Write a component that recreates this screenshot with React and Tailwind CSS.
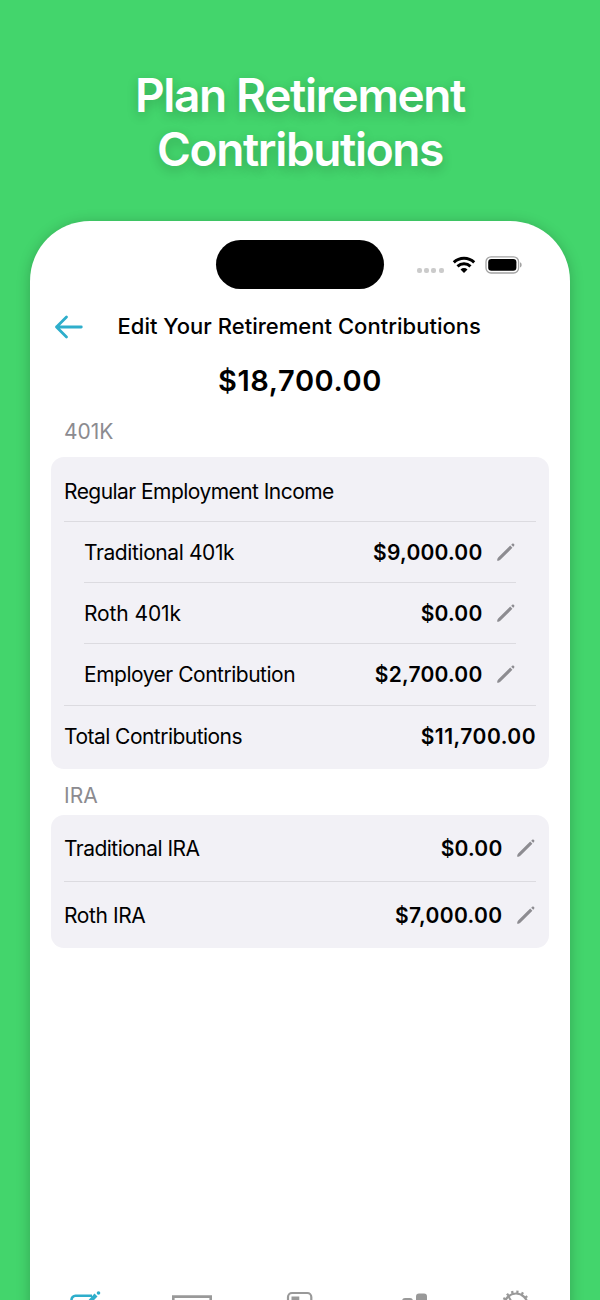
import { clsx } from 'clsx';

const plans401k = [
  { label: 'Traditional 401k', amount: '$9,000.00', spacing: 'tracking-[-0.4px]' },
  { label: 'Roth 401k', amount: '$0.00', spacing: 'tracking-[-0.1px]' },
  { label: 'Employer Contribution', amount: '$2,700.00', spacing: 'tracking-[-0.49px]' },
];

export default function App() {
  return (
    <div className="flex h-[1300px] w-[600px] flex-col items-center overflow-hidden bg-[#43d56c] font-['Inter',sans-serif] text-black">
      <h1 className="mt-[68px] h-[153px] shrink-0 text-center text-[46px] font-semibold leading-[54px] tracking-[-1.35px] text-white [text-shadow:0_4px_12px_rgba(0,0,0,.2)]">
        Plan Retirement
        <br />
        Contributions
      </h1>

      <div className="flex h-[1160px] w-[540px] shrink-0 flex-col rounded-[60px] bg-white shadow-[0_2px_14px_rgba(0,0,0,.22)]">
        <StatusBar />

        <header className="mt-[20px] flex h-[36px] items-center pl-[24px]">
          <BackArrow />
          <h2 className="ml-[33.5px] whitespace-nowrap pb-[2px] text-[22px] font-medium tracking-[0.02px]">
            Edit Your Retirement Contributions
          </h2>
        </header>

        <p className="mt-[16px] h-[40px] text-center text-[29px] font-semibold leading-[40px] tracking-[0.6px]">
          $18,700.00
        </p>

        <main className="px-[21px]">
          <SectionLabel className="mt-[16px]">401K</SectionLabel>
          <section className="mt-[10px] rounded-[13px] bg-[#f2f1f6] px-[13px]">
            <Row label="Regular Employment Income" spacing="tracking-[-0.55px]" className="h-[65px] border-b pt-[5px]" />
            {plans401k.map((plan, index) => (
              <Row
                key={plan.label}
                {...plan}
                editable
                className={clsx('mx-[20px] h-[61px]', index < 2 && 'border-b', index < 2 ? 'pt-[2px]' : 'pt-px')}
              />
            ))}
            <Row
              label="Total Contributions"
              amount="$11,700.00"
              spacing="tracking-[-0.53px]"
              amountSpacing="tracking-[0.5px]"
              className="h-[64px] border-t pb-[2px]"
            />
          </section>

          <SectionLabel className="mt-[12px]">IRA</SectionLabel>
          <section className="mt-[4px] rounded-[13px] bg-[#f2f1f6] px-[13px]">
            <Row
              label="Traditional IRA"
              amount="$0.00"
              editable
              spacing="tracking-[-0.53px]"
              className="h-[67px] border-b pt-[2px]"
            />
            <Row
              label="Roth IRA"
              amount="$7,000.00"
              editable
              spacing="tracking-[-0.4px]"
              amountSpacing="tracking-[0.38px]"
              className="h-[66px] pt-px"
            />
          </section>
        </main>

        <TabBar />
      </div>
    </div>
  );
}

function StatusBar() {
  return (
    <div className="flex h-[68px] shrink-0 pl-[186px] pt-[19px]">
      <div className="h-[49px] w-[168px] rounded-full bg-black" />
      <div className="ml-[33px] mt-[28px] flex gap-[2.2px]">
        <i className="size-[5px] rounded-[2px] bg-[#cbcbcb]" />
        <i className="size-[5px] rounded-[2px] bg-[#cbcbcb]" />
        <i className="size-[5px] rounded-[2px] bg-[#cbcbcb]" />
        <i className="size-[5px] rounded-[2px] bg-[#cbcbcb]" />
      </div>
      <svg className="ml-[8.4px] mt-[16px]" width="24" height="18" viewBox="0 0 24 18" fill="none" stroke="#000" strokeWidth="3">
        <path d="M1.8 6.4C7.5 .9 16.5 .9 22.2 6.4" />
        <path d="M5.5 10.3C9.1 6.9 14.9 6.9 18.5 10.3" />
        <path d="M12 17 8.5 13.4C10.5 11.6 13.5 11.6 15.5 13.4Z" fill="#000" stroke="none" />
      </svg>
      <svg className="ml-[9px] mt-[16px]" width="38" height="18" viewBox="0 0 38 18">
        <rect x="1" y=".8" width="32.6" height="16.2" rx="5" fill="none" stroke="#a3a3a3" strokeWidth="1.3" />
        <rect x="3.2" y="3" width="28.2" height="11.8" rx="3.2" />
        <path d="M35 6.3c2.2.8 2.2 4.4 0 5.2Z" fill="#a3a3a3" />
      </svg>
    </div>
  );
}

function BackArrow() {
  return (
    <svg
      width="30"
      height="24"
      viewBox="0 0 30 24"
      fill="none"
      stroke="#2eaecb"
      strokeWidth="2.8"
      strokeLinecap="round"
      strokeLinejoin="round"
    >
      <path d="M27.3 12H2.5M12.5 2 2.5 12l10 10" />
    </svg>
  );
}

function SectionLabel({ className, children }) {
  return (
    <h3 className={clsx('h-[30px] pl-[13px] text-[21px] leading-[30px] text-[#8c8b90]', className)}>{children}</h3>
  );
}

function Row({ label, amount, editable, spacing, amountSpacing = 'tracking-[0.22px]', className }) {
  return (
    <div className={clsx('flex items-center whitespace-nowrap border-[#dcdbe0] text-[21px]', className)}>
      <span className={spacing}>{label}</span>
      {amount && <span className={clsx('ml-auto font-semibold', amountSpacing)}>{amount}</span>}
      {editable && <Pencil />}
    </div>
  );
}

function Pencil() {
  return (
    <svg className="mb-[2px] ml-[13px] mr-[.5px]" width="20" height="20" viewBox="0 0 20 20" fill="#8d8c91">
      <path d="M1.200 18.700c0-1.500.3-2.500 1.200-3.400L14.200 3.600l2.200 2.200L4.600 17.500c-.9.900-1.900 1.200-3.400 1.200Z" />
      <path d="m15.200 2.700.8-.8c1.400-1.200 3.200.6 2 2l-.8.8Z" />
    </svg>
  );
}

function TabBar() {
  return (
    <nav className="mt-[339px] flex shrink-0 pl-[38px] text-[#999]">
      <svg width="36" height="36" viewBox="0 0 36 36" fill="none" stroke="#2eaecb" strokeWidth="2.6">
        <path d="M24 8.8H7.500a4 4 0 0 0-4 4V30a4 4 0 0 0 4 4H26a4 4 0 0 0 4-4V15" />
        <path d="m15 22 1-4L26.500 6.600l3 3L18.500 20.500Z" fill="#2eaecb" stroke="none" />
        <circle cx="30.500" cy="6" r="1.800" fill="#2eaecb" stroke="none" />
      </svg>
      <svg className="ml-[67.600px]" width="42" height="36" viewBox="0 0 42 36" fill="none" stroke="currentColor" strokeWidth="2.600">
        <path d="M1.300 9.600h37.400v24H1.300z" />
      </svg>
      <svg className="ml-[72.400px]" width="30" height="36" viewBox="0 0 30 36" fill="none" stroke="currentColor" strokeWidth="2.200">
        <rect x="2" y="6" width="23.300" height="29" rx="4" />
        <path d="M5.500 9.500h7.800v8H5.500z" fill="currentColor" stroke="none" />
      </svg>
      <svg className="ml-[85px]" width="30" height="36" viewBox="0 0 30 36" fill="currentColor">
        <rect x="1" y="11" width="11" height="26" rx="3" />
        <rect x="15" y="6.500" width="11" height="30" rx="3" />
      </svg>
      <svg className="ml-[69px]" width="32" height="36" viewBox="0 0 32 36" fill="none" stroke="currentColor">
        <circle cx="16" cy="18" r="11.500" strokeWidth="2.200" />
        <circle cx="16" cy="18" r="13" strokeWidth="2.800" strokeDasharray="2.200 2.900" />
        <path d="m8.500 9.500 5 8.500" strokeWidth="2" />
      </svg>
    </nav>
  );
}
